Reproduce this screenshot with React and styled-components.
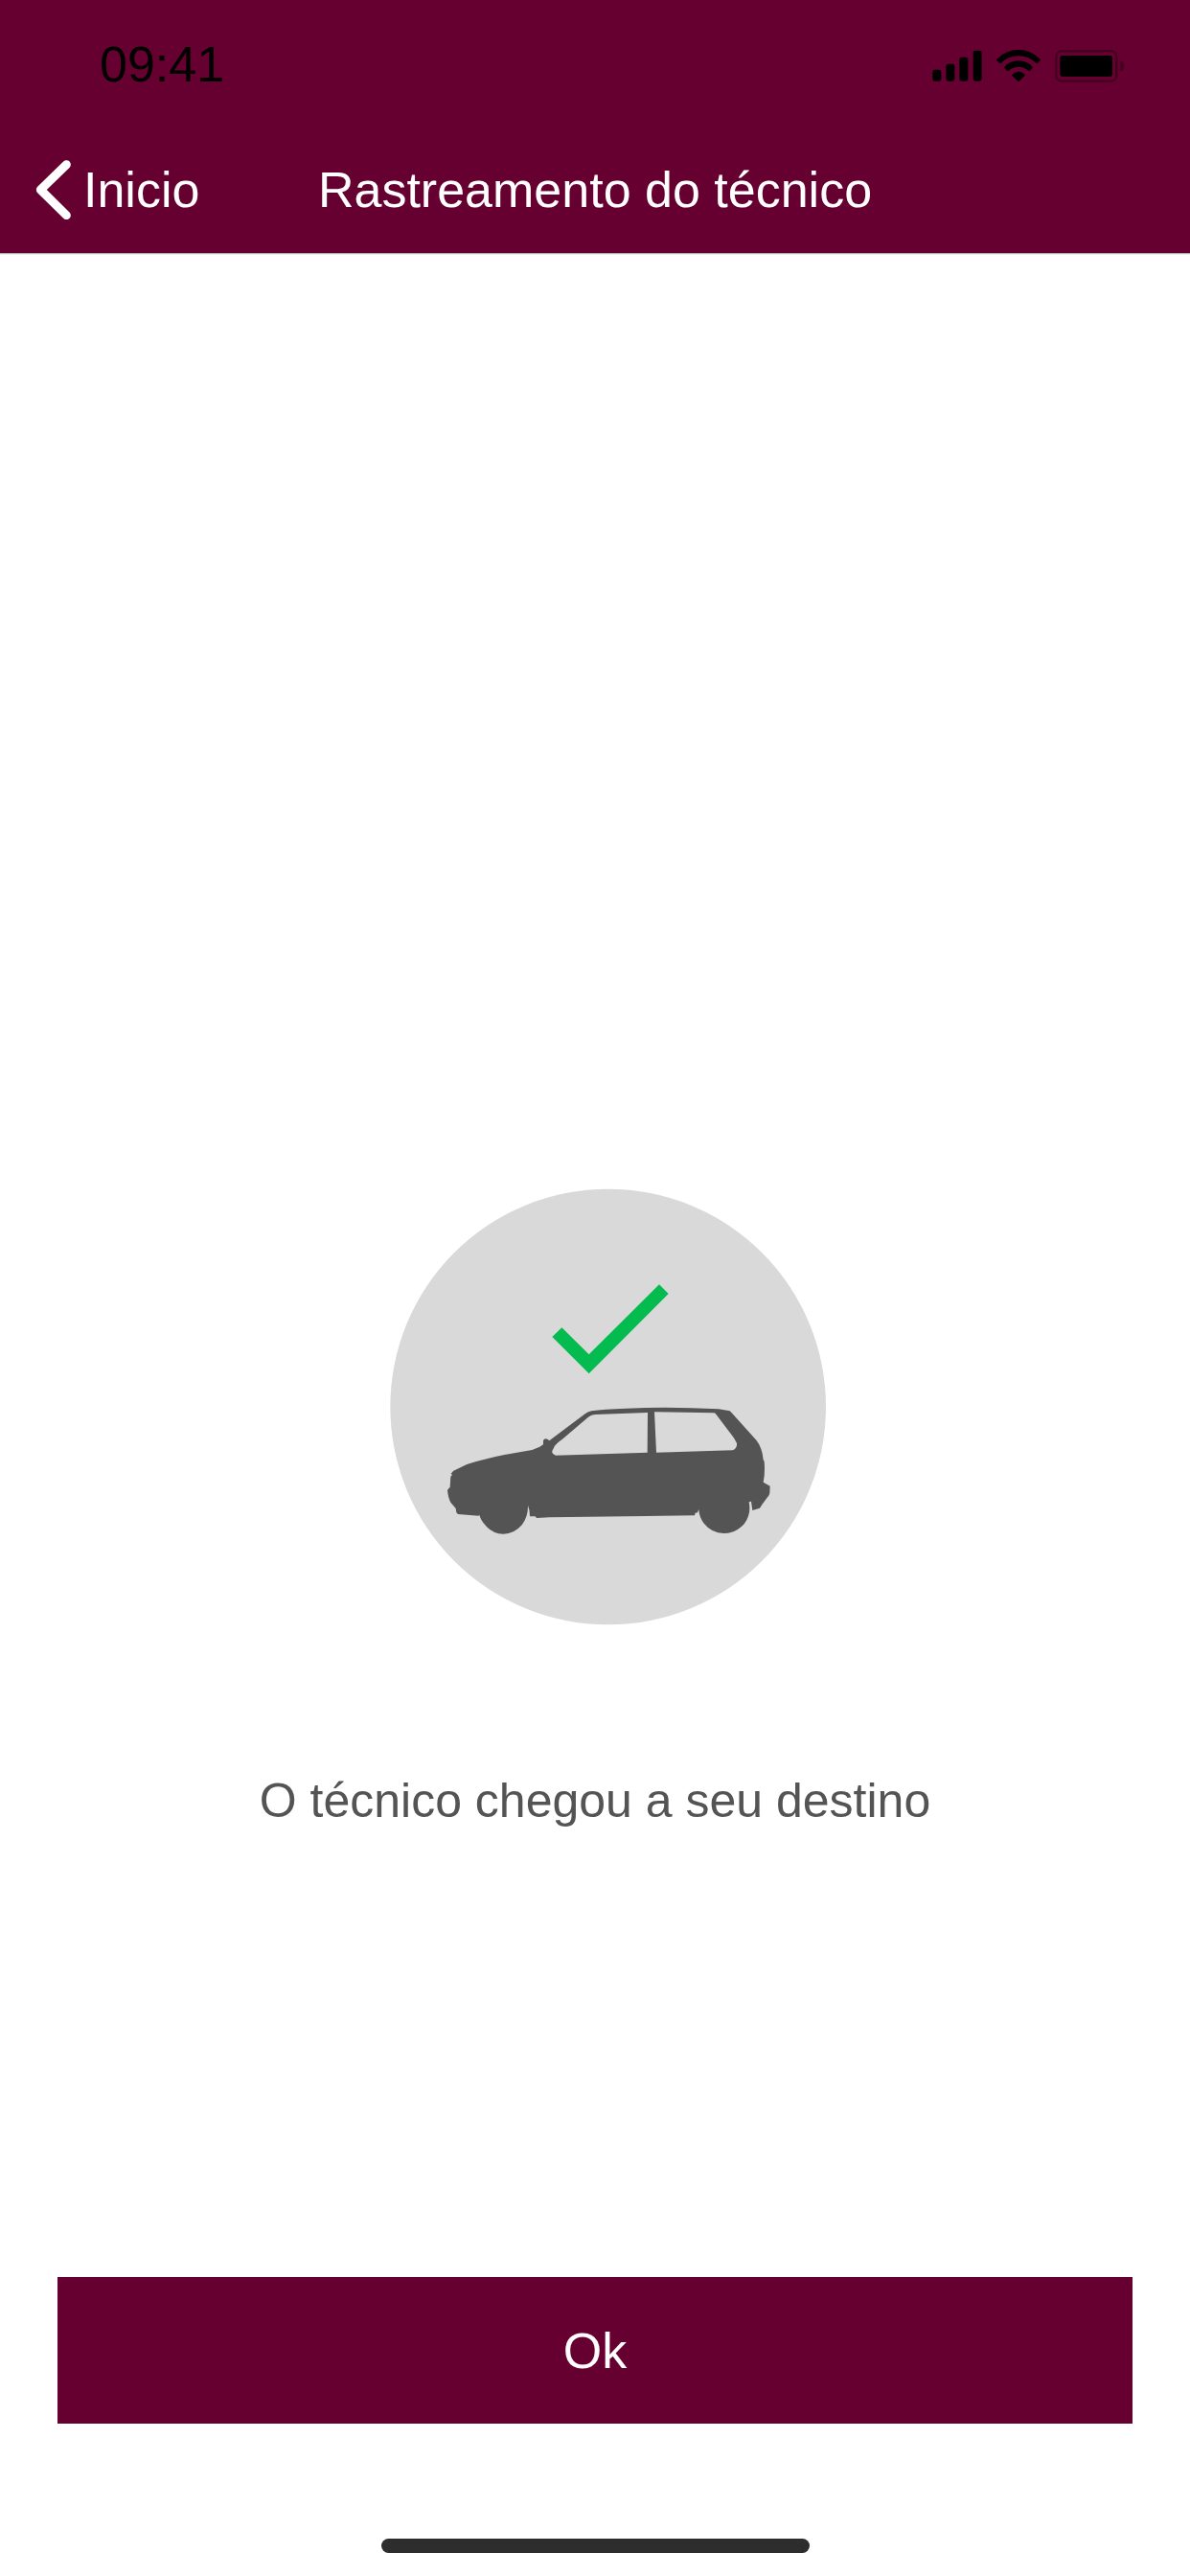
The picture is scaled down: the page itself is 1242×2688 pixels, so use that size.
import React from 'react';
import styled, { createGlobalStyle } from 'styled-components';

const wine = '#660030';
const grey = '#545454';

const GlobalStyle = createGlobalStyle`
  * {
    box-sizing: border-box;
  }

  body {
    margin: 0;
    background-color: #fff;
    font-family: "Liberation Sans", Arial, Helvetica, sans-serif;
  }
`

const Screen = styled.div`
  display: flex;
  flex-direction: column;
  min-height: 100vh;
`

const Header = styled.header`
  padding-bottom: 2px;
  background-color: ${wine};
  border-bottom: 1px solid #b2b2b2;
  box-shadow: 0 1px 0 #ececec;
`

const StatusBar = styled.div`
  display: flex;
  align-items: center;
  justify-content: space-between;
  height: 134px;
  padding: 0 68px 0 104px;
  font-size: 52px;
  color: #000;
`

const StatusIcons = styled.div`
  display: flex;
  align-items: center;
  gap: 15px;
  padding-top: 3px;

  svg {
    display: block;
  }
`

const NavBar = styled.nav`
  display: grid;
  grid-template-columns: 1fr auto 1fr;
  align-items: center;
  height: 128px;
  padding: 0 37px;
`

const BackLink = styled.a`
  display: flex;
  align-items: center;
  justify-self: start;
  gap: 13px;
  font-size: 52px;
  color: #fff;
  text-decoration: none;
`

const Title = styled.h1`
  margin: 0;
  font-size: 52px;
  font-weight: 400;
  color: #fff;
`

const Main = styled.main`
  flex: 1;
  display: flex;
  flex-direction: column;
  align-items: center;
  justify-content: flex-end;
  gap: 153px;
  padding-bottom: 467px;
`

const Message = styled.p`
  margin: 0;
  font-size: 50px;
  line-height: 60px;
  text-align: center;
  color: ${grey};
`

const Footer = styled.footer`
  display: flex;
  flex-direction: column;
  padding: 0 60px 24px;
`

const OkButton = styled.button`
  height: 153px;
  padding: 0;
  border: 0;
  background-color: ${wine};
  font-family: inherit;
  font-size: 52px;
  color: #fff;
`

const HomeIndicator = styled.div`
  align-self: center;
  width: 447px;
  height: 15px;
  margin-top: 120px;
  border-radius: 8px;
  background-color: #2d2d2d;
`

const SignalIcon = () => (
  <svg width="52" height="33" viewBox="99 67 156 99" aria-hidden="true">
    <rect x="100" y="129" width="27" height="36" rx="7" />
    <rect x="142" y="111" width="27" height="54" rx="7" />
    <rect x="184" y="90" width="27" height="75" rx="7" />
    <rect x="227" y="69" width="27" height="96" rx="7" />
  </svg>
)

const WifiIcon = () => (
  <svg width="46" height="33" viewBox="299 66 138 99" aria-hidden="true">
    <path d="M300 95 Q329 66 368 66 Q407 66 436 95 Q438 97 436 99 L428 107 Q426 109 423 107 Q399 85 368 85 Q337 85 313 107 Q310 109 308 107 L300 99 Q298 97 300 95Z" />
    <path d="M324 119 Q343 100 368 100 Q393 100 412 119 Q414 121 412 123 L404 131 Q402 133 399 131 Q385 119 368 119 Q351 119 337 131 Q334 133 332 131 L324 123 Q322 121 324 119Z" />
    <path d="M348 143 Q357 134 368 134 Q379 134 388 143 Q390 145 388 147 L370 164 Q368 166 366 164 L348 147 Q346 145 348 143Z" />
  </svg>
)

const BatteryIcon = () => (
  <svg width="73" height="34" viewBox="483 66 219 102" aria-hidden="true">
    <rect x="487" y="70" width="189" height="94" rx="17" fill="none" stroke="#000" strokeOpacity="0.35" strokeWidth="7" />
    <rect x="499" y="84" width="164" height="66" rx="9" />
    <path d="M688 99 C696 103 700 109 700 117 C700 126 696 132 688 135Z" fillOpacity="0.35" />
  </svg>
)

const ChevronIcon = () => (
  <svg width="37" height="62" viewBox="111 498 111 186" fill="none" aria-hidden="true">
    <path d="M208 512 L127 591 L208 671" stroke="#fff" strokeWidth="27" strokeLinecap="round" strokeLinejoin="round" />
  </svg>
)

const ArrivedIllustration = () => (
  <svg width="482" height="456" viewBox="-60 30 1446 1368" role="img" aria-label="Carro no destino">
    <circle cx="704" cy="714" r="682" fill="#d9d9d9" />
    <path d="M529 495 L559 466 L644 550 L864 331 L893 360 L644 610Z" fill="#04bb4f" />
    {/* body with the two windows cut out */}
    <path
      fill={grey}
      fillRule="evenodd"
      d="M212 923 L220 914 L262 894 Q310 878 380 864 L466 849 L490 839 L501 832 L501 820 Q503 814 509 814 Q516 815 520 820
        L630 737 Q640 729 652 727 Q690 721 760 719 Q900 713 1050 721 L1085 727 L1091 733 L1168 818 Q1187 842 1190 880
        L1193 885 Q1196 922 1190 950 L1211 962 L1210 985 Q1208 993 1202 998 L1186 1020 L1179 1031 L1156 1038
        L1152 1010 L1145 1012 Q1153 1050 1130 1081 Q1104 1110 1066 1110 Q1028 1109 1005 1080 Q989 1060 988 1035
        L984 1045 L977 1046 L975 1054 L820 1056 L520 1060 L480 1062 L476 1057 L459 1057 Q459 1036 453 1022
        Q454 1058 434 1084 Q410 1112 376 1112 Q341 1111 319 1084 Q304 1066 301 1052 L298 1055 L234 1050 L229 1045
        L227 1032 L211 1013 Q203 998 201 974 L209 965 L211 932 L216 927Z
        M828 732 L664 738 Q651 739 642 746 L560 816 Q539 830 534 842 L529 852 Q527 861 540 866 L827 857Z
        M849 730 L855 857 L1093 850 Q1109 845 1107 828 Q1100 813 1085 794 L1042 737 Q1039 733 1033 733Z"
    />
  </svg>
)

export default function App() {
  return (
    <Screen>
      <GlobalStyle />
      <Header>
        <StatusBar>
          <span>09:41</span>
          <StatusIcons>
            <SignalIcon />
            <WifiIcon />
            <BatteryIcon />
          </StatusIcons>
        </StatusBar>
        <NavBar>
          <BackLink href="#inicio">
            <ChevronIcon />
            Inicio
          </BackLink>
          <Title>Rastreamento do técnico</Title>
        </NavBar>
      </Header>
      <Main>
        <ArrivedIllustration />
        <Message>O técnico chegou a seu destino</Message>
      </Main>
      <Footer>
        <OkButton type="button">Ok</OkButton>
        <HomeIndicator />
      </Footer>
    </Screen>
  );
}
